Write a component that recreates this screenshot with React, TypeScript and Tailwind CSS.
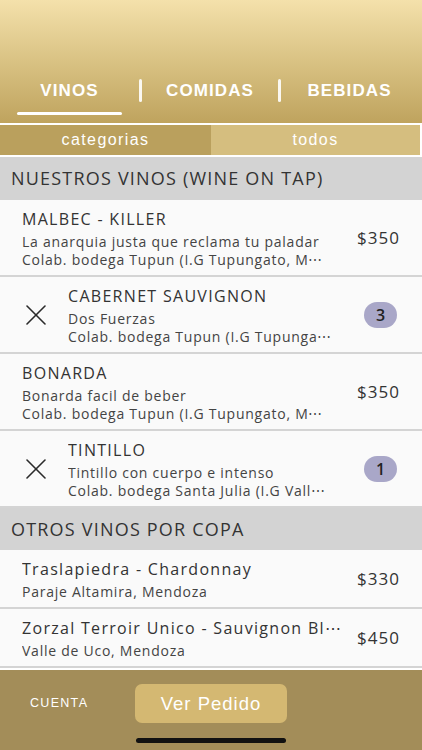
import { ReactNode } from 'react';

const bodyFont = { fontFamily: '"Open Sans", "Noto Sans", sans-serif' };
const uiFont = { fontFamily: '"Liberation Sans", Arial, sans-serif' };

type Item = {
  title: string;
  lines: string[];
  price?: string;
  qty?: number;
};

const tapWines: Item[] = [
  {
    title: 'MALBEC - KILLER',
    lines: ['La anarquia justa que reclama tu paladar', 'Colab. bodega Tupun (I.G Tupungato, M⋯'],
    price: '$350',
  },
  {
    title: 'CABERNET SAUVIGNON',
    lines: ['Dos Fuerzas', 'Colab. bodega Tupun (I.G Tupunga⋯'],
    qty: 3,
  },
  {
    title: 'BONARDA',
    lines: ['Bonarda facil de beber', 'Colab. bodega Tupun (I.G Tupungato, M⋯'],
    price: '$350',
  },
  {
    title: 'TINTILLO',
    lines: ['Tintillo con cuerpo e intenso', 'Colab. bodega Santa Julia (I.G Vall⋯'],
    qty: 1,
  },
];

const glassWines: Item[] = [
  { title: 'Traslapiedra - Chardonnay', lines: ['Paraje Altamira, Mendoza'], price: '$330' },
  { title: 'Zorzal Terroir Unico - Sauvignon Bl⋯', lines: ['Valle de Uco, Mendoza'], price: '$450' },
];

const CloseIcon = () => (
  <svg width="22" height="20" viewBox="0 0 22 20" fill="none" stroke="#2b2b2b" strokeWidth="1.6" strokeLinecap="round">
    <path d="M2 1 L20 19" />
    <path d="M20 1 L2 19" />
  </svg>
);

const SectionHeader = ({ children, h }: { children: ReactNode; h: string }) => (
  <div className={`${h} bg-[#d3d3d3] flex items-center px-[11px] text-[18px] text-[#333] tracking-[1.2px]`} style={bodyFont}>
    {children}
  </div>
);

const Row = ({ item, tall }: { item: Item; tall: boolean }) => {
  const ordered = item.qty !== undefined;
  return (
    <div
      className={`${tall ? 'h-[77px]' : 'h-[59px]'} bg-[#fafafa] border-b-2 border-[#d4d4d4] flex items-center`}
      style={bodyFont}
    >
      {ordered ? (
        <div className="w-[68px] pl-[25px] flex items-center shrink-0">
          <CloseIcon />
        </div>
      ) : (
        <div className="w-[22px] shrink-0" />
      )}
      <div className="flex-1 min-w-0 flex flex-col">
        <div className="text-[16px] leading-[24px] mb-[2px] tracking-[1.3px] text-[#333] whitespace-nowrap overflow-hidden">
          {item.title}
        </div>
        {item.lines.map((l) => (
          <div key={l} className="text-[14px] leading-[18px] tracking-[0.75px] text-[#444] whitespace-nowrap overflow-hidden">
            {l}
          </div>
        ))}
      </div>
      <div className="w-[80px] shrink-0 flex justify-end pr-[22px]">
        {ordered ? (
          <div className="w-[33px] h-[26px] rounded-full bg-[#a9a7c8] flex items-center justify-center text-[16px] font-semibold text-[#222] mr-[3px]">
            {item.qty}
          </div>
        ) : (
          <span className="text-[17px] tracking-[1px] text-[#333]">{item.price}</span>
        )}
      </div>
    </div>
  );
};

export default function App() {
  return (
    <div className="w-[422px] h-[750px] flex flex-col bg-white overflow-hidden">
      {/* header with gold gradient */}
      <div className="h-[123px] shrink-0 bg-gradient-to-b from-[#f4e1ab] via-[#d9c283] to-[#bfa35e] flex flex-col justify-end">
        <div className="flex items-center text-white font-bold text-[17px] tracking-[1.1px]" style={uiFont}>
          <div className="w-[139px] flex justify-center">VINOS</div>
          <div className="w-[3px] h-[23px] bg-white/90 rounded-sm" />
          <div className="w-[136px] flex justify-center">COMIDAS</div>
          <div className="w-[3px] h-[23px] bg-white/90 rounded-sm" />
          <div className="flex-1 flex justify-center pr-[4px]">BEBIDAS</div>
        </div>
        <div className="h-[3px] w-[105px] ml-[17px] mt-[9px] mb-[8px] bg-white rounded-full" />
      </div>

      <div className="h-[2px] bg-white shrink-0" />

      {/* sub tabs */}
      <div className="h-[30px] shrink-0 flex text-white text-[16px] tracking-[1.4px] pr-[2px] bg-white" style={uiFont}>
        <div className="w-[211px] bg-[#baa05d] flex items-center justify-center">categorias</div>
        <div className="flex-1 bg-[#d5be7f] flex items-center justify-center">todos</div>
      </div>

      <div className="h-[2px] bg-white shrink-0" />

      {/* list */}
      <div className="flex-1 min-h-0 overflow-hidden flex flex-col">
        <SectionHeader h="h-[43px] shrink-0">NUESTROS VINOS (WINE ON TAP)</SectionHeader>
        {tapWines.map((w) => (
          <Row key={w.title} item={w} tall />
        ))}
        <SectionHeader h="h-[42px] shrink-0">OTROS VINOS POR COPA</SectionHeader>
        {glassWines.map((w) => (
          <Row key={w.title} item={w} tall={false} />
        ))}
      </div>

      {/* bottom bar */}
      <div className="h-[80px] shrink-0 bg-[#a38d59] relative">
        <div className="flex items-center h-[56px] pt-[11px]" style={uiFont}>
          <div className="w-[135px] pl-[30px] text-white text-[12.5px] tracking-[1.3px]">CUENTA</div>
          <div className="w-[152px] h-[39px] rounded-[7px] bg-[#d4b872] flex items-center justify-center text-white text-[18.5px] tracking-[1px]">
            Ver Pedido
          </div>
        </div>
        <div className="absolute left-[136px] bottom-[7px] w-[150px] h-[5px] rounded-full bg-[#111]" />
      </div>
    </div>
  );
}
